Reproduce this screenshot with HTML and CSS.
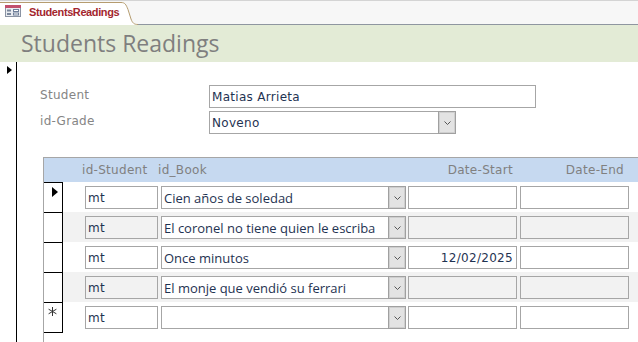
FILE: index.html
```html
<!DOCTYPE html>
<html lang="es">
<head>
    <meta charset="UTF-8">
    <title>StudentsReadings</title>
    <link rel="stylesheet" href="styles.css">
</head>
<body>

    <div class="tabstrip">
        <div class="tab">
            <svg class="tab-icon" width="16" height="12" viewBox="0 0 16 12">
                <rect x="0.5" y="0.5" width="15" height="11" fill="#e9ecf1" stroke="#8a93a3"/>
                <rect x="0" y="0" width="16" height="3" fill="#c24f6c"/>
                <rect x="2" y="4.5" width="4" height="2" fill="#7a879c"/>
                <rect x="8.5" y="4.5" width="5" height="2" fill="#fff" stroke="#6f7f99"/>
                <rect x="2" y="8" width="4" height="2" fill="#7a879c"/>
                <rect x="8.5" y="8" width="5" height="2" fill="#fff" stroke="#6f7f99"/>
            </svg>
            <span class="tab-title">StudentsReadings</span>
        </div>
        <svg class="tab-curve" width="18" height="23" viewBox="0 0 18 23">
            <path d="M0 0 H1 C5 0 6 2 8 7 L11 17 C12.5 21 14 22.5 18 22.5 V23 H0 Z" fill="#fff"/>
            <path d="M0 0.5 H1 C5 0.5 6 2.5 8 7.5 L11 17 C12.5 21 14 22.5 18 22.5" fill="none" stroke="#b59c6f"/>
        </svg>
        <div class="tab-rest"></div>
    </div>

    <div class="title-band">
        <h1>Students Readings</h1>
    </div>

    <div class="main">
        <div class="recsel"><span class="arrow"></span></div>

        <div class="form-body">
            <div class="field-row">
                <label>Student</label>
                <div class="textbox student">Matias Arrieta</div>
            </div>
            <div class="field-row">
                <label>id-Grade</label>
                <div class="combo grade">
                    <div class="combo-text">Noveno</div>
                    <div class="combo-btn"><svg width="7" height="4" viewBox="0 0 7 4"><polyline points="0.5,0.5 3.5,3.5 6.5,0.5" fill="none" stroke="#555"/></svg></div>
                </div>
            </div>

            <div class="subform">
                <div class="sub-head">
                    <div class="h-cell h-id">id-Student</div>
                    <div class="h-cell h-book">id_Book</div>
                    <div class="h-cell h-start">Date-Start</div>
                    <div class="h-cell h-end">Date-End</div>
                </div>

                <div class="row">
                    <div class="rsel"><span class="arrow"></span></div>
                    <div class="cells">
                        <div class="textbox id">mt</div>
                        <div class="combo book">
                            <div class="combo-text">Cien años de soledad</div>
                            <div class="combo-btn"><svg width="7" height="4" viewBox="0 0 7 4"><polyline points="0.5,0.5 3.5,3.5 6.5,0.5" fill="none" stroke="#555"/></svg></div>
                        </div>
                        <div class="textbox date start"></div>
                        <div class="textbox date"></div>
                    </div>
                </div>

                <div class="row alt">
                    <div class="rsel"></div>
                    <div class="cells">
                        <div class="textbox id">mt</div>
                        <div class="combo book">
                            <div class="combo-text">El coronel no tiene quien le escriba</div>
                            <div class="combo-btn"><svg width="7" height="4" viewBox="0 0 7 4"><polyline points="0.5,0.5 3.5,3.5 6.5,0.5" fill="none" stroke="#555"/></svg></div>
                        </div>
                        <div class="textbox date start"></div>
                        <div class="textbox date"></div>
                    </div>
                </div>

                <div class="row">
                    <div class="rsel"></div>
                    <div class="cells">
                        <div class="textbox id">mt</div>
                        <div class="combo book">
                            <div class="combo-text">Once minutos</div>
                            <div class="combo-btn"><svg width="7" height="4" viewBox="0 0 7 4"><polyline points="0.5,0.5 3.5,3.5 6.5,0.5" fill="none" stroke="#555"/></svg></div>
                        </div>
                        <div class="textbox date start">12/02/2025</div>
                        <div class="textbox date"></div>
                    </div>
                </div>

                <div class="row alt">
                    <div class="rsel"></div>
                    <div class="cells">
                        <div class="textbox id">mt</div>
                        <div class="combo book">
                            <div class="combo-text">El monje que vendió su ferrari</div>
                            <div class="combo-btn"><svg width="7" height="4" viewBox="0 0 7 4"><polyline points="0.5,0.5 3.5,3.5 6.5,0.5" fill="none" stroke="#555"/></svg></div>
                        </div>
                        <div class="textbox date start"></div>
                        <div class="textbox date"></div>
                    </div>
                </div>

                <div class="row new">
                    <div class="rsel">
                        <svg class="star" width="9" height="9" viewBox="0 0 9 9">
                            <path d="M4.5 0 V9 M0.6 2.2 L8.4 6.8 M8.4 2.2 L0.6 6.8" stroke="#333" stroke-width="1"/>
                        </svg>
                    </div>
                    <div class="cells">
                        <div class="textbox id">mt</div>
                        <div class="combo book">
                            <div class="combo-text"></div>
                            <div class="combo-btn"><svg width="7" height="4" viewBox="0 0 7 4"><polyline points="0.5,0.5 3.5,3.5 6.5,0.5" fill="none" stroke="#555"/></svg></div>
                        </div>
                        <div class="textbox date start"></div>
                        <div class="textbox date"></div>
                    </div>
                </div>
            </div>
        </div>
    </div>

</body>
</html>
```

FILE: styles.css
```css
body {
    margin: 0;
    background-color: #fff;
    font-family: "DejaVu Sans", sans-serif;
    font-size: 12px;
    overflow: hidden;
}

/* barra de pestañas */
.tabstrip {
    display: flex;
    height: 23px;
    padding-top: 1px;
    border-top: 1px solid #d4d4d4;
    background-color: #f7f7f7;
}

.tab {
    display: flex;
    align-items: flex-start;
    width: 120px;
    height: 23px;
    box-sizing: border-box;
    padding: 2px 0 0 5px;
    background-color: #fff;
    border-top: 1px solid #b59c6f;
    white-space: nowrap;
}

.tab-icon {
    flex: none;
}

.tab-title {
    margin-left: 8px;
    font-family: "Liberation Sans", Arial, sans-serif;
    font-weight: bold;
    font-size: 11px;
    letter-spacing: -0.4px;
    line-height: 14px;
    color: #a3262e;
}

.tab-curve {
    flex: none;
}

.tab-rest {
    flex: 1;
    height: 22px;
    border-bottom: 1px solid #8f96a0;
}

/* titulo */
.title-band {
    height: 37px;
    background-color: #e3ebd6;
}

.title-band h1 {
    margin: 0;
    padding-left: 21px;
    font-family: "Open Sans", sans-serif;
    font-weight: normal;
    font-size: 23px;
    line-height: 36px;
    color: #7f7f7f;
}

.main {
    display: flex;
    height: 280px;
}

.recsel {
    width: 16px;
    flex: none;
    border-right: 1px solid #000;
}

.arrow {
    display: block;
    width: 0;
    height: 0;
    border-left: 5px solid #000;
    border-top: 4px solid transparent;
    border-bottom: 4px solid transparent;
}

.recsel .arrow {
    margin: 4px 0 0 7px;
}

.form-body {
    flex: 1;
    display: flex;
    flex-direction: column;
    padding: 23px 0 0 23px;
}

.field-row {
    display: flex;
    align-items: center;
    height: 23px;
    margin-bottom: 3px;
}

.field-row label {
    width: 169px;
    padding-bottom: 3px;
    color: #858585;
    letter-spacing: 0.3px;
}

.textbox {
    display: flex;
    align-items: center;
    height: 23px;
    box-sizing: border-box;
    padding-left: 2px;
    border: 1px solid #a6a6a6;
    color: #1f3352;
    letter-spacing: 0.3px;
    white-space: nowrap;
}

.student {
    width: 327px;
    background-color: #fff;
}

.combo {
    display: flex;
    height: 23px;
}

.combo-text {
    flex: 1;
    display: flex;
    align-items: center;
    box-sizing: border-box;
    padding-left: 2px;
    border: 1px solid #a6a6a6;
    border-right: none;
    background-color: #fff;
    color: #1f3352;
    letter-spacing: 0.3px;
    white-space: nowrap;
    overflow: hidden;
}

.combo-btn {
    width: 18px;
    flex: none;
    display: flex;
    align-items: center;
    justify-content: center;
    box-sizing: border-box;
    border: 1px solid #a0a0a0;
    box-shadow: inset 0 0 0 1px #cfcfcf;
    background-color: #e3e3e3;
}

.grade {
    width: 247px;
}

/* subformulario */
.subform {
    flex: 1;
    margin: 20px 0 0 3px;
    border-top: 1px solid #a6a6a6;
    border-left: 1px solid #a6a6a6;
}

.sub-head {
    display: flex;
    align-items: center;
    height: 24px;
    background-color: #c6d9f0;
    color: #808080;
    letter-spacing: 0.3px;
}

.h-id {
    width: 76px;
    margin-left: 38px;
}

.h-book {
    width: 250px;
}

.h-start {
    width: 112px;
    box-sizing: border-box;
    padding-right: 7px;
    text-align: right;
}

.h-end {
    width: 109px;
    box-sizing: border-box;
    padding-right: 5px;
    text-align: right;
}

.row {
    display: flex;
    height: 30px;
}

.rsel {
    width: 19px;
    flex: none;
    box-sizing: border-box;
    border-top: 1px solid #000;
    border-right: 1px solid #000;
    background-color: #fff;
}

.rsel .arrow {
    margin: 4px 0 0 8px;
    border-left-width: 6px;
    border-top-width: 5px;
    border-bottom-width: 5px;
}

.row.new .rsel {
    height: 31px;
    border-bottom: 1px solid #000;
}

.star {
    display: block;
    margin: 4px 0 0 4px;
}

.cells {
    flex: 1;
    display: flex;
    align-items: flex-start;
    padding: 4px 0 0 22px;
}

.row.alt .cells {
    background-color: #f2f2f2;
}

.id {
    width: 73px;
    margin-right: 3px;
}

.book {
    width: 245px;
    margin-right: 2px;
}

.book .combo-text {
    font-family: "Open Sans", sans-serif;
    font-size: 13px;
    letter-spacing: 0;
}

.date {
    width: 109px;
    justify-content: flex-end;
    padding: 0 3px 0 0;
}

.date.start {
    margin-right: 3px;
}
```
